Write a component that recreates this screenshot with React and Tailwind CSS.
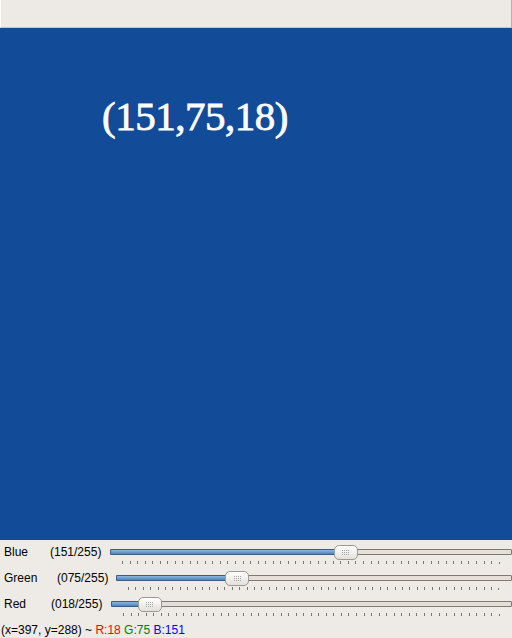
import React from 'react'

const TICKS = Array.from({ length: 51 }, (_, i) => i)

function Slider({ value }) {
  const pct = value / 255
  return (
    <div className="flex-1 flex flex-col">
      <div className="relative h-[14px]">
        <div className="absolute left-0 right-0 top-[4px] h-[6px] border border-[#7f7873] bg-[#e4dfd8] rounded-[1px]" />
        <div
          className="absolute left-0 top-[4px] h-[6px] border border-[#3d5d83] bg-gradient-to-b from-[#8fb6e0] to-[#4d84c2] rounded-[1px]"
          style={{ width: `calc(12px + (100% - 24px) * ${pct})` }}
        />
        <div
          className="absolute top-0 w-[24px] h-[15px] rounded-[5px] border border-[#9d9891] bg-gradient-to-b from-[#ffffff] to-[#e3e0db] flex items-center justify-center"
          style={{ left: `calc((100% - 24px) * ${pct})` }}
        >
          <div className="grid grid-cols-4 gap-[1px]">
            {Array.from({ length: 12 }, (_, i) => (
              <span key={i} className="w-[1px] h-[1px] bg-[#a8a39d]" />
            ))}
          </div>
        </div>
      </div>
      <div className="mx-[12px] mt-[2px] flex justify-between items-start">
        {TICKS.map(i => (
          <span key={i} className={`w-[1px] bg-[#7a7570] ${i === 50 ? 'h-[2px] mt-[1px]' : 'h-[3px]'}`} />
        ))}
      </div>
    </div>
  )
}

function Row({ label, value, labelW, valueW }) {
  return (
    <div className="flex items-start h-[26px] pt-[5px] pl-[4px]">
      <span className={`h-[14px] flex items-center ${labelW}`}>{label}</span>
      <span className={`h-[14px] flex items-center ${valueW}`}>({String(value).padStart(3, '0')}/255)</span>
      <Slider value={value} />
    </div>
  )
}

export default function App() {
  return (
    <div className="w-[512px] h-[638px] overflow-hidden flex flex-col bg-[#edeae6] text-black" style={{ fontFamily: '"Liberation Sans", Arial, sans-serif' }}>
      <div className="h-[28px] flex-shrink-0 bg-[#edeae6] border-b border-[#c9c4bd] border-r border-r-[#b5b0a9] border-l border-l-white" />
      <div className="h-[512px] flex-shrink-0 bg-[#124b97] pl-[102px] pt-[68px]">
        <span
          className="text-white text-[41px] tracking-[-0.5px] leading-none [-webkit-text-stroke:0.8px_white]"
          style={{ fontFamily: '"Liberation Serif", "Times New Roman", serif' }}
        >
          (151,75,18)
        </span>
      </div>
      <div className="flex flex-col text-[12px] bg-[#eeebe7]">
        <Row label="Blue" value={151} labelW="w-[46px]" valueW="w-[60px]" />
        <Row label="Green" value={75} labelW="w-[53px]" valueW="w-[59px]" />
        <Row label="Red" value={18} labelW="w-[47px]" valueW="w-[60px]" />
        <div className="pl-[1px] pt-[5px] text-[12px] leading-[14px] whitespace-nowrap">
          (x=397, y=288) ~ <span className="text-[#ff0000]">R:18</span> <span className="text-[#008000]">G:75</span> <span className="text-[#0000ff]">B:151</span>
        </div>
      </div>
    </div>
  )
}
